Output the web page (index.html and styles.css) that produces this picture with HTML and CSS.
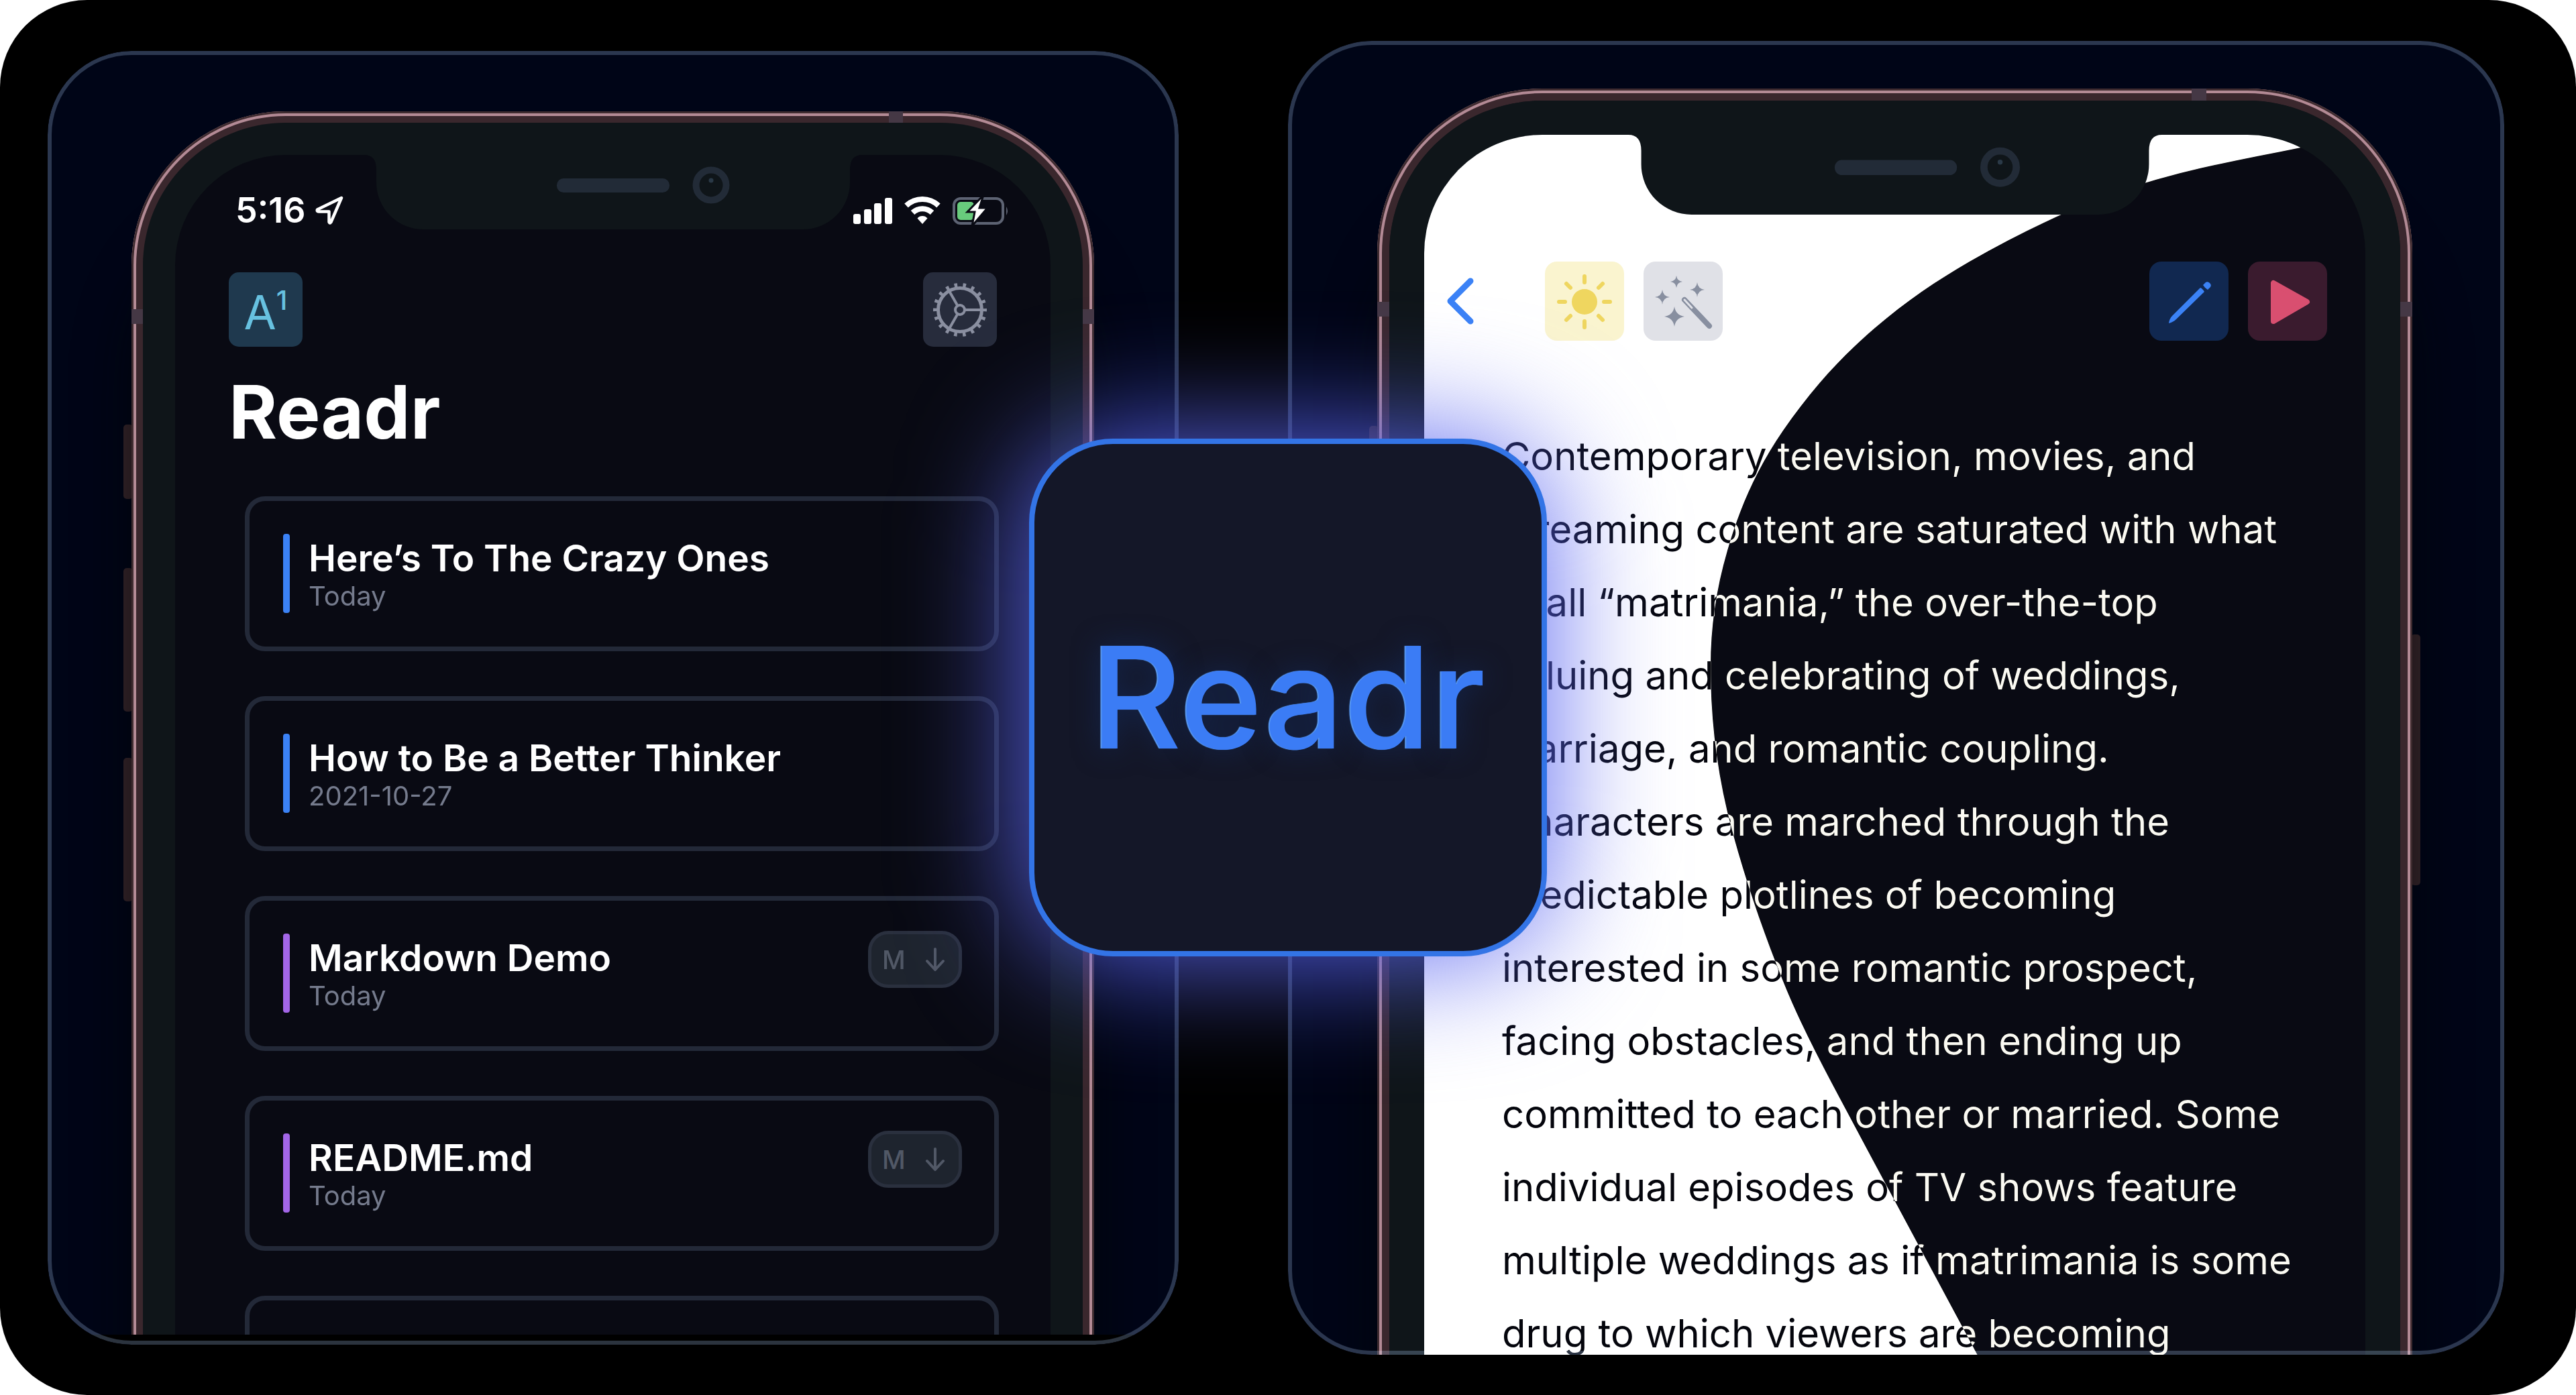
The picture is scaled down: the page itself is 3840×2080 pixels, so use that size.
FILE: index.html
```html
<!DOCTYPE html>
<html lang="en">
<head>
<meta charset="utf-8">
<title>Readr</title>
<meta name="viewport" content="width=device-width, initial-scale=1">
<link rel="stylesheet" href="styles.css">
</head>
<body>
<main class="stage">
  <section class="panel panel-library" aria-label="Library">
    <div class="phone">
      <span class="side-button key-mute"></span>
      <span class="side-button key-up"></span>
      <span class="side-button key-down"></span>
      <div class="frame">
        <span class="band band-top"></span>
        <span class="band band-left"></span>
        <span class="band band-right"></span>
        <div class="screen">
          <div class="status">
            <div class="clock">5:16
              <svg width="44" height="44" viewBox="0 0 44 44" fill="none" stroke="#fff" stroke-width="4.500" stroke-linejoin="round" aria-hidden="true"><path d="M39 3 3 20.500q-1 3 2 3H20.500V39q1 3 3 0z"/></svg>
            </div>
            <svg class="signals" width="234" height="44" viewBox="0 0 234 44" aria-hidden="true">
              <g fill="#fff">
                <rect x="0" y="27" width="11" height="15" rx="3"/><rect x="16" y="20" width="11" height="22" rx="3"/><rect x="31" y="11" width="11" height="31" rx="3"/><rect x="47" y="3" width="11" height="39" rx="3"/>
                <path d="M103 42 95.500 33.500a10 10 0 0 1 15 0z"/>
              </g>
              <g fill="none" stroke="#fff" stroke-width="8"><path d="M79 14.500a35 35 0 0 1 48 0"/><path d="M88.500 25a21 21 0 0 1 29 0"/></g>
              <rect x="150" y="4" width="73" height="37" rx="10" fill="none" stroke="#5d6373" stroke-width="4"/>
              <path d="M228 16q4 6.500 0 13z" fill="#5d6373"/>
              <rect x="155" y="9" width="25" height="27" rx="5" fill="#68cb7c"/>
              <path d="M194-1 170 24h11l-4 21 23-27h-12z" fill="#fff" stroke="#090a13" stroke-width="3"/>
            </svg>
          </div>
          <header class="library-bar">
            <button class="tool tool-font" aria-label="Text size">A<sup>1</sup></button>
            <button class="tool tool-gear" aria-label="Settings">
              <svg width="110" height="110" viewBox="0 0 110 110" fill="none" stroke="#8a8fa0" aria-hidden="true">
                <circle cx="55" cy="55" r="36.500" stroke-width="7" stroke-dasharray="4.500 8.241" stroke-dashoffset="2.250"/>
                <circle cx="55" cy="55" r="32.500" stroke-width="5"/>
                <circle cx="55" cy="55" r="7" stroke-width="4"/>
                <path d="M63 55h24M51 48 39 27M51 62 39 83" stroke-width="4"/>
              </svg>
            </button>
          </header>
          <h1 class="title">Readr</h1>
          <div class="cards">
            <article class="card blue"><div class="card-text"><h2>Here’s To The Crazy Ones</h2><p>Today</p></div></article>
            <article class="card blue"><div class="card-text"><h2>How to Be a Better Thinker</h2><p>2021-10-27</p></div></article>
            <article class="card purple"><div class="card-text"><h2>Markdown Demo</h2><p>Today</p></div>
              <span class="badge">M<svg width="30" height="36" viewBox="0 0 30 36" fill="none" stroke="currentColor" stroke-width="4" stroke-linecap="round" stroke-linejoin="round" aria-hidden="true"><path d="M15 2v31M3 20l12 13 12-13"/></svg></span></article>
            <article class="card purple"><div class="card-text"><h2>README.md</h2><p>Today</p></div>
              <span class="badge">M<svg width="30" height="36" viewBox="0 0 30 36" fill="none" stroke="currentColor" stroke-width="4" stroke-linecap="round" stroke-linejoin="round" aria-hidden="true"><path d="M15 2v31M3 20l12 13 12-13"/></svg></span></article>
            <article class="card"></article>
          </div>
        </div>
        <div class="notch"><svg viewBox="0 0 742 111" width="742" height="111" aria-hidden="true">
          <path d="M0 0Q18 0 18 22V41A70 70 0 0 0 88 111H654A70 70 0 0 0 724 41V22Q724 0 742 0z" fill="#0f1519"/>
          <rect x="287" y="35" width="168" height="21" rx="10" fill="#222b37"/>
          <circle cx="517" cy="45" r="22.500" fill="none" stroke="#222b37" stroke-width="10"/><circle cx="517" cy="38" r="3.500" fill="#2a3947"/>
        </svg></div>
      </div>
    </div>
  </section>

  <section class="panel panel-reader" aria-label="Reader">
    <div class="phone">
      <span class="side-button key-mute"></span>
      <span class="side-button key-power"></span>
      <div class="frame">
        <span class="band band-top"></span>
        <span class="band band-left"></span>
        <span class="band band-right"></span>
        <div class="screen">
          <p class="article">Contemporary television, movies, and<br>streaming content are saturated with what<br>I call “matrimania,” the over-the-top<br>valuing and celebrating of weddings,<br>marriage, and romantic coupling.<br>Characters are marched through the<br>predictable plotlines of becoming<br>interested in some romantic prospect,<br>facing obstacles, and then ending up<br>committed to each other or married. Some<br>individual episodes of TV shows feature<br>multiple weddings as if matrimania is some<br>drug to which viewers are becoming</p>
          <div class="night night-invert"></div>
          <div class="night night-tint"></div>
          <nav class="reader-bar">
            <button class="back" aria-label="Back"><svg width="50" height="80" viewBox="0 0 50 80" fill="none" stroke="#3b82f6" stroke-width="9" stroke-linecap="round" stroke-linejoin="round" aria-hidden="true"><path d="M40 10 10 40l30 30"/></svg></button>
            <button class="tool tool-sun" aria-label="Light theme">
              <svg width="118" height="118" viewBox="0 0 118 118" fill="#efd65f" stroke="#efd65f" stroke-width="6" stroke-linecap="round" aria-hidden="true"><circle cx="59" cy="60" r="19" stroke="none"/><path d="M59 22v9M59 89v9M21 60h9M88 60h9M32 33l6 6M80 81l6 6M86 33l-6 6M38 81l-6 6"/></svg>
            </button>
            <button class="tool tool-wand" aria-label="Magic format">
              <svg width="118" height="118" viewBox="0 0 118 118" fill="#888fa0" aria-hidden="true">
                <path d="M49 21q1 8 9 9-8 1-9 9-1-8-9-9 8-1 9-9zM80 31q1 9.500 11 11-10 1-11 11-1-10-11-11 10-1.500 11-11zM28 42q1 9.500 11 11-10 1-11 11-1-10-11-11 10-1.500 11-11zM46 67q2 13 15 15-13 2-15 15-2-13-15-15 13-2 15-15z"/>
                <path d="M61 57 98 96" stroke="#888fa0" stroke-width="8" stroke-linecap="round"/><path d="M61 57 72 69" stroke="#e0e1e7" stroke-width="3" stroke-linecap="round"/>
              </svg>
            </button>
            <span class="spacer"></span>
            <button class="tool tool-pencil" aria-label="Edit">
              <svg width="118" height="118" viewBox="0 0 118 118" fill="#3b82f6" aria-hidden="true"><path d="M76 39q3 1 6 6L40 86q-4 4-11 6 1-7 5-11zM80 35l4-4q3-2 6 1t1 6l-4 4q-4-2-7-7z"/></svg>
            </button>
            <button class="tool tool-play" aria-label="Play">
              <svg width="118" height="118" viewBox="0 0 118 118" fill="#d94f70" stroke="#d94f70" stroke-width="8" stroke-linejoin="round" aria-hidden="true"><path d="M38 32v57L88 60z"/></svg>
            </button>
          </nav>
        </div>
        <div class="notch"><svg viewBox="0 0 742 111" width="798" height="119" aria-hidden="true">
          <path d="M0 0Q18 0 18 22V41A70 70 0 0 0 88 111H654A70 70 0 0 0 724 41V22Q724 0 742 0z" fill="#0f1519"/>
          <rect x="287" y="35" width="170" height="21" rx="10" fill="#222b37"/>
          <circle cx="517" cy="45" r="22.500" fill="none" stroke="#222b37" stroke-width="10"/><circle cx="517" cy="38" r="3.500" fill="#2a3947"/>
        </svg></div>
      </div>
    </div>
  </section>

  <div class="app-glow"></div>
  <div class="app-icon">Readr</div>
</main>
</body>
</html>
```
FILE: styles.css
```css
* { box-sizing: border-box; }

body {
  margin: 0;
  background: #fff;
  color: #fff;
  font-family: Inter, "Liberation Sans", sans-serif;
}

h1, h2, p { margin: 0; }

button {
  border: 0;
  padding: 0;
  background: none;
  font: inherit;
  cursor: pointer;
}

svg { display: block; flex: none; }

.stage {
  position: relative;
  display: grid;
  grid-template-columns: minmax(0, 1686fr) minmax(0, 1813fr);
  grid-template-rows: minmax(0, 1fr);
  column-gap: 163px;
  height: 100vh;
  padding: 61px 107px 60px 71px;
  border-radius: 130px;
  background: #000;
  overflow: hidden;
}

/* Panels */
.panel {
  position: relative;
  isolation: isolate;
  border-radius: 125px;
  background: #000517;
  overflow: hidden;
}

.panel::after {
  content: "";
  position: absolute;
  inset: 0;
  border: 6px solid #2b333e;
  border-radius: 125px;
  mix-blend-mode: screen;
  pointer-events: none;
}

.panel-library {
  margin: 15px 0;
  padding: 90px 126px 0 125px;
}

.panel-reader { padding: 71px 137px 0 133px; }

.panel-library::before {
  content: "";
  position: absolute;
  inset: auto 0 0;
  height: 15px;
  background: #000;
  z-index: 1;
}

.panel-library::after { z-index: 2; }

/* Phones */
.phone {
  position: relative;
  height: 100%;
}

.frame {
  position: relative;
  height: 120%;
  padding: 17px 17px 0;
  border-radius: 230px 230px 0 0;
  background: #3a272d;
  box-shadow: inset 0 0 0 3px #3f2c30, inset 0 0 0 7px #b38a95, 0 160px 80px rgba(0, 5, 8, 0.7);
}

.panel-reader .frame {
  padding: 18px 18px 0;
  border-radius: 246px 246px 0 0;
}

.screen {
  position: relative;
  height: 100%;
  border: 48px solid #0f1519;
  border-bottom: 0;
  border-radius: 213px 213px 0 0;
  background: #090a13;
  overflow: hidden;
}

.panel-reader .screen {
  border-width: 48px 49px 0;
  border-radius: 228px 228px 0 0;
  background: #0f1519;
  isolation: isolate;
}

/* Bezel drawn over the blended screen so its corners stay clean. */
.panel-reader .frame::after {
  content: "";
  position: absolute;
  inset: 18px 18px 0;
  border: solid #0f1519;
  border-width: 51px 52px 0;
  border-radius: 228px 228px 0 0;
  pointer-events: none;
}

.side-button {
  position: absolute;
  width: 14px;
  border-radius: 5px;
  background: #3a272c;
}

.key-mute { left: -12px; top: 467px; height: 111px; }
.key-up { left: -12px; top: 681px; height: 214px; }
.key-down { left: -12px; top: 964px; height: 214px; }
.panel-reader .key-mute { top: 503px; height: 120px; }
.key-power { right: -12px; top: 814px; height: 374px; }

.band {
  position: absolute;
  z-index: 1;
  background: #453845;
}

.band-top { top: 0; right: 285px; width: 21px; height: 17px; }
.band-left { top: 295px; left: 0; width: 17px; height: 22px; }
.band-right { top: 295px; right: 0; width: 17px; height: 22px; }
.panel-reader .band-top { right: 307px; width: 22px; height: 18px; }
.panel-reader .band-left,
.panel-reader .band-right { top: 318px; width: 18px; }

.notch {
  position: absolute;
  top: 65px;
  left: 0;
  right: 0;
  display: flex;
  justify-content: center;
}

.panel-reader .notch { top: 69px; }

/* Library screen */
.status {
  display: flex;
  justify-content: space-between;
  align-items: center;
  height: 64px;
  margin: 51px 60px 0 90px;
}

.clock {
  display: flex;
  align-items: center;
  gap: 14px;
  font-size: 52px;
  font-weight: 600;
  line-height: 64px;
}

.library-bar {
  display: flex;
  justify-content: space-between;
  padding: 60px 80px 0;
}

.tool {
  display: flex;
  align-items: center;
  justify-content: center;
  flex: none;
  width: 118px;
  height: 118px;
  border-radius: 18px;
}

.library-bar .tool {
  width: 110px;
  height: 111px;
  border-radius: 15px;
}

.tool-font {
  padding-top: 8px;
  background: #1f394e;
  color: #67c1e0;
  font-size: 70px;
  font-weight: 400;
  line-height: 100px;
}

.tool-font sup {
  align-self: flex-start;
  font-size: 40px;
  font-weight: 500;
  line-height: 68px;
}

.tool-gear { background: #272c3c; }

.title {
  padding: 28px 80px 0;
  font-size: 110px;
  font-weight: 700;
  line-height: 138px;
}

.cards {
  display: flex;
  flex-direction: column;
  gap: 67px;
  padding: 57px 77px 0 104px;
}

.card {
  display: flex;
  flex: none;
  justify-content: space-between;
  align-items: flex-start;
  height: 231px;
  padding: 41px 48px 0 50px;
  border: 7px solid #232938;
  border-radius: 30px;
}

.card-text {
  position: relative;
  padding: 8px 0 0 38px;
}

.card-text::before {
  content: "";
  position: absolute;
  left: 0;
  top: 8px;
  width: 10px;
  height: 118px;
  border-radius: 4px;
  background: #a366e8;
}

.blue .card-text::before { background: #3b82f6; }

.card h2 {
  padding-top: 2px;
  font-size: 55px;
  font-weight: 600;
  line-height: 68px;
}

.card p {
  color: #757b8d;
  font-size: 40px;
  line-height: 46px;
}

.badge {
  display: flex;
  align-items: center;
  justify-content: space-between;
  width: 140px;
  height: 85px;
  margin-top: 4px;
  padding: 0 20px 0 16px;
  border: 5px solid #2a303e;
  border-radius: 30px;
  background: #1e242e;
  color: #515866;
  font-size: 38px;
  font-weight: 500;
}

/* Reader screen */
.article {
  min-height: 100%;
  padding: 428px 0 0 119px;
  background: #fff;
  color: #04050c;
  font-size: 58px;
  line-height: 109px;
  white-space: nowrap;
}

/* The night theme sweeps in from the right: invert, then lift black to the theme colour. */
.night {
  position: absolute;
  inset: 3px 0 0 3px;
  clip-path: path("M2400 -200L1307 19C1229 35 1152 48 1074 72C987 99 900 139 813 189C756 222 699 261 642 315C606 349 571 389 535 441C494 501 469 560 452 620C435 678 427 735 427 793C427 874 437 956 459 1037C479 1112 505 1187 535 1262C567 1342 612 1421 654 1501L823 1816L1160 2450L4000 2450V-200Z");
}

.night-invert { background: #fff; mix-blend-mode: difference; }
.night-tint { background: #090a13; mix-blend-mode: lighten; }

.reader-bar {
  position: absolute;
  top: 192px;
  left: 32px;
  right: 60px;
  display: flex;
  align-items: center;
  gap: 29px;
}

.back {
  width: 122px;
}

.spacer { flex: 1; }

.tool-sun { background: #faf4cf; }
.tool-wand { background: #e0e1e7; }
.tool-pencil { background: #112850; }
.tool-play { background: #3a1b2e; }

/* App icon */
.app-glow,
.app-icon {
  position: absolute;
  inset: 0;
  z-index: 3;
  width: 772px;
  height: 772px;
  margin: auto;
  border-radius: 125px;
}

.app-glow {
  background: #5b66f0;
  filter: blur(92px);
}

.app-icon {
  display: flex;
  align-items: center;
  justify-content: center;
  border: 8px solid #3374e6;
  background: #141728;
  color: #3b7cf5;
  font-size: 210px;
  font-weight: 500;
  line-height: 1;
  text-shadow: -2px 0 1px #5a9cf5, 0 0 40px #14264f;
}
```
